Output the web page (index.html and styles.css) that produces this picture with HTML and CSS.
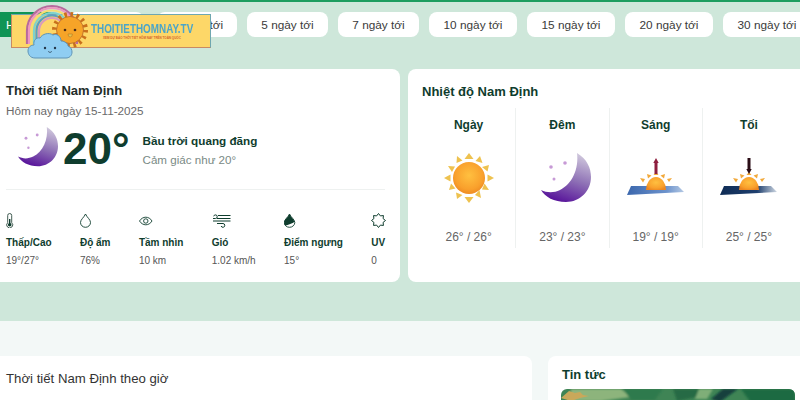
FILE: index.html
```html
<!DOCTYPE html>
<html lang="vi">
<head>
<meta charset="utf-8">
<title>Thời tiết Nam Định</title>
<link rel="stylesheet" href="styles.css">
</head>
<body>
<svg class="defs" width="0" height="0" aria-hidden="true">
  <defs>
    <linearGradient id="moonGrad" x1="0.7" y1="0" x2="0.35" y2="1">
      <stop offset="0" stop-color="#cfc7dc"/><stop offset="0.5" stop-color="#8f72b6"/><stop offset="1" stop-color="#57129a"/>
    </linearGradient>
    <radialGradient id="sunGrad" cx="0.5" cy="0.42" r="0.62">
      <stop offset="0" stop-color="#ffc040"/><stop offset="0.7" stop-color="#f9a02c"/><stop offset="1" stop-color="#ec8620"/>
    </radialGradient>
    <linearGradient id="dayGround" x1="0" y1="0" x2="1" y2="0">
      <stop offset="0" stop-color="#3b67ad"/><stop offset="0.7" stop-color="#6d93cc"/><stop offset="1" stop-color="#b4c9e4"/>
    </linearGradient>
    <linearGradient id="duskGround" x1="0" y1="0" x2="1" y2="0">
      <stop offset="0" stop-color="#0f2c55"/><stop offset="0.65" stop-color="#1e3f6e"/><stop offset="1" stop-color="#cfd8e3"/>
    </linearGradient>
    <filter id="soft"><feGaussianBlur stdDeviation="1"/></filter>
    <g id="moon">
      <path d="M36 0C46 6 50 15 50 24C50 38 39 49 25 49C13 49 4 44 0 37C6 40 13 40 19 37C31 31 38 16 36 0Z" fill="url(#moonGrad)"/>
      <g fill="#c79ad6"><circle cx="10" cy="14" r="1.800"/><circle cx="24" cy="10" r="1.800"/><circle cx="13" cy="26" r="1.500"/></g>
    </g>
    <g id="dawnRays">
      <g fill="#f2a93b"><path d="M14 25l5 1-2 3.500z"/><path d="M21 21l4.500 1.500-3.500 3z"/><path d="M30 19l2.500 3h-5z"/><path d="M39 21l-1 4.500-3.500-3z"/><path d="M46 25l-3 4-2-3z"/></g>
      <path d="M20 37a10 13 0 0 1 20 0Z" fill="url(#sunGrad)"/>
    </g>
  </defs>
</svg>

<section class="hero">
  <a class="logo" href="#" aria-label="Thời tiết hôm nay">
    <svg class="logo-art" viewBox="0 0 66 56" width="66" height="56" aria-hidden="true">
      <g fill="none" stroke-width="2.200">
        <path d="M2 40V27A25 25 0 0 1 52 27V40" stroke="#b76a9d"/>
        <path d="M4 40V27A23 23 0 0 1 50 27V40" stroke="#ef97c0"/>
        <path d="M6.500 40V27A20.500 20.500 0 0 1 47.500 27V40" stroke="#f6dc71"/>
        <path d="M9 40V27A18 18 0 0 1 45 27V40" stroke="#7fd2cc"/>
        <path d="M11.500 40V27A15.500 15.500 0 0 1 42.500 27V40" stroke="#5b9fc0"/>
        <path d="M14 40V27A13 13 0 0 1 40 27V40" stroke="#d99bbd"/>
      </g>
      <circle cx="45" cy="26" r="15.500" fill="none" stroke="#c9701c" stroke-width="5" stroke-dasharray="2.500 3.590"/>
      <circle cx="45" cy="26" r="13.500" fill="#f6a428" stroke="#b8682a" stroke-width="0.800"/>
      <circle cx="40" cy="26" r="1.300" fill="#4a2c1a"/><circle cx="50" cy="26" r="1.300" fill="#4a2c1a"/>
      <path d="M43 30a2.200 3 0 0 0 4.400 0Z" fill="#e8c34a" stroke="#a86a20" stroke-width="0.500"/>
      <path d="M10 54C5 54 3 50 3 47C3 43 6 41 9 41C8 37 11 33 15 34C17 30 24 28 28 31C31 29 36 32 36 37C40 37 43 40 43 42C46 43 47 46 47 48C47 52 44 54 41 54Z" fill="#8fcdf2" stroke="#5e93b5" stroke-width="1"/>
      <circle cx="20" cy="44" r="1.200" fill="#23384a"/><circle cx="30" cy="44" r="1.200" fill="#23384a"/>
      <path d="M23.500 47a1.500 1.500 0 0 0 3 0" fill="none" stroke="#23384a" stroke-width="0.600"/>
    </svg>
    <span class="logo-name">THOITIETHOMNAY.TV</span>
    <span class="logo-tag">XEM DỰ BÁO THỜI TIẾT HÔM NAY TRÊN TOÀN QUỐC</span>
  </a>

  <nav class="tabs">
    <a class="tab tab-active" href="#">Hôm nay</a>
    <a class="tab tab-2" href="#">Ngày mai</a>
    <a class="tab tab-3" href="#">3 ngày tới</a>
    <a class="tab tab-n" href="#">5 ngày tới</a>
    <a class="tab tab-n" href="#">7 ngày tới</a>
    <a class="tab tab-w" href="#">10 ngày tới</a>
    <a class="tab tab-w" href="#">15 ngày tới</a>
    <a class="tab tab-w" href="#">20 ngày tới</a>
    <a class="tab tab-w" href="#">30 ngày tới</a>
  </nav>

  <div class="cards">
    <article class="card current">
      <h1 class="title">Thời tiết Nam Định</h1>
      <p class="date">Hôm nay ngày 15-11-2025</p>
      <div class="now">
        <svg class="now-icon" viewBox="0 0 50 50" width="40" height="40" aria-hidden="true"><use href="#moon"/></svg>
        <div class="temp">20°</div>
        <div class="now-text">
          <div class="sky">Bầu trời quang đãng</div>
          <div class="feels">Cảm giác như 20°</div>
        </div>
      </div>
      <ul class="stats">
        <li class="stat">
          <svg class="stat-icon" width="8" height="15" viewBox="0 0 8 15" aria-hidden="true"><path d="M1.700 2.500a2 2 0 0 1 4 0v7.200a3 3 0 1 1-4 0Z" fill="none" stroke="#2c4b40" stroke-width="0.900"/><circle cx="3.700" cy="11.800" r="1.800" fill="#0f3d2e"/><rect x="3" y="6" width="1.400" height="5" fill="#0f3d2e"/></svg>
          <b>Thấp/Cao</b><span>19°/27°</span>
        </li>
        <li class="stat">
          <svg class="stat-icon" width="12" height="15" viewBox="0 0 12 15" aria-hidden="true"><path d="M5.500 1C7 4.500 10.500 6.500 10.500 9.500a5 4.800 0 0 1-10 0C.5 6.500 4 4.500 5.500 1Z" fill="none" stroke="#0f3d2e" stroke-width="0.900"/></svg>
          <b>Độ ẩm</b><span>76%</span>
        </li>
        <li class="stat">
          <svg class="stat-icon" width="14" height="15" viewBox="0 0 14 15" aria-hidden="true"><path d="M.5 8C2 5.500 4.500 4.200 6.800 4.200S11.600 5.500 13 8c-1.400 2.500-3.900 3.800-6.200 3.800S2 10.500.5 8Z" fill="none" stroke="#0f3d2e" stroke-width="0.900"/><circle cx="6.800" cy="8" r="2.200" fill="none" stroke="#0f3d2e" stroke-width="0.900"/></svg>
          <b>Tầm nhìn</b><span>10 km</span>
        </li>
        <li class="stat">
          <svg class="stat-icon" width="19" height="15" viewBox="0 0 19 15" aria-hidden="true"><path d="M1 5.500H3.500a1.800 1.800 0 1 0-1.800-2.200M6 2.500h12.500M5 5.500h13.500M1 8h17.500M5 10.500h6a1.900 1.900 0 1 1-1.900 2.500" fill="none" stroke="#0f3d2e" stroke-width="1"/></svg>
          <b>Gió</b><span>1.02 km/h</span>
        </li>
        <li class="stat">
          <svg class="stat-icon" width="12" height="15" viewBox="0 0 12 15" aria-hidden="true"><path d="M5.500 1C7 4.500 10.800 6.500 10.800 9.500a5.300 4.800 0 0 1-10.600 0C.2 6.500 4 4.500 5.500 1Z" fill="none" stroke="#0f3d2e" stroke-width="0.900"/><path d="M5.500 1C4 4.500.2 6.500.2 9.500c0 1.200.4 2.300 1.100 3C4 12 8.500 10.500 10.700 8.800 9.600 6.300 6.800 4 5.500 1Z" fill="#0f3d2e"/></svg>
          <b>Điểm ngưng</b><span>15°</span>
        </li>
        <li class="stat">
          <svg class="stat-icon" width="15" height="15" viewBox="0 0 15 15" aria-hidden="true"><polygon points="14.500,7.500 12.100,9.400 12.450,12.450 9.400,12.100 7.500,14.500 5.600,12.100 2.550,12.450 2.900,9.400 .5,7.500 2.900,5.600 2.550,2.550 5.600,2.900 7.500,.5 9.400,2.900 12.450,2.550 12.100,5.600" fill="none" stroke="#0f3d2e" stroke-width="1"/></svg>
          <b>UV</b><span>0</span>
        </li>
      </ul>
    </article>

    <article class="card temps">
      <h2 class="title">Nhiệt độ Nam Định</h2>
      <div class="periods">
        <div class="period">
          <h3>Ngày</h3>
          <svg class="period-icon" viewBox="-5 0 60 50" aria-hidden="true">
            <g fill="#eec24f">
              <path d="M25 0l4.500 6h-9z"/><path d="M36 3l2.500 7-7-2z"/><path d="M45 12l-1.500 6.500-5.500-4.500z"/><path d="M50 25l-6.500 3.500v-7z"/><path d="M45 37l-7-.5 2.500-6z"/><path d="M37 45l-6-3 4.500-5z"/><path d="M25 50l-4.500-6h9z"/><path d="M13 46l-1-6.500 6.500 2.500z"/><path d="M5 37l2-6.500 4.500 5z"/><path d="M0 25l6.500-3.500v7z"/><path d="M4 13l7 .5-3 5.500z"/><path d="M13 3l5.500 4.500-6 2.500z"/>
            </g>
            <circle cx="25" cy="25" r="16" fill="url(#sunGrad)"/>
          </svg>
          <p>26° / 26°</p>
        </div>
        <div class="period">
          <h3>Đêm</h3>
          <svg class="period-icon" viewBox="-9 0 60 50" aria-hidden="true"><use href="#moon"/></svg>
          <p>23° / 23°</p>
        </div>
        <div class="period">
          <h3>Sáng</h3>
          <svg class="period-icon" viewBox="0 0 60 50" aria-hidden="true">
            <path d="M5 33H52L58 39L1 42Z" fill="url(#dayGround)"/>
            <use href="#dawnRays"/>
            <path d="M30 5l2.700 5h-1.200v11h-3V10h-1.200z" fill="#8e1f3f"/>
          </svg>
          <p>19° / 19°</p>
        </div>
        <div class="period">
          <h3>Tối</h3>
          <svg class="period-icon" viewBox="0 0 60 50" aria-hidden="true">
            <path d="M5 33H52L58 39L1 42Z" fill="url(#duskGround)"/>
            <use href="#dawnRays"/>
            <path d="M28.500 5h3v11h1.200L30 21l-2.700-5h1.200z" fill="#2a0d16"/>
          </svg>
          <p>25° / 25°</p>
        </div>
      </div>
    </article>
  </div>
</section>

<section class="lower">
  <article class="card hourly">
    <h2 class="hourly-title">Thời tiết Nam Định theo giờ</h2>
  </article>
  <aside class="card news">
    <h2 class="title">Tin tức</h2>
    <div class="news-photo">
      <svg viewBox="0 0 234 20" width="234" height="20" aria-hidden="true">
        <rect width="234" height="20" fill="#3f8455"/>
        <g filter="url(#soft)">
          <path d="M10 0H60L70 8 40 12H8Z" fill="#8db47c"/>
          <path d="M62 0h40l-8 11H70Z" fill="#2f7a4e"/>
          <path d="M112 0h38l-14 8-20 4Z" fill="#256b45"/>
          <path d="M150 10L162 0h15l-10 7-8 6Z" fill="#123f3c"/>
          <path d="M138 0h14l-6 10h-12Z" fill="#7fae78"/>
          <path d="M180 0h54v14H190Z" fill="#1f6b42"/>
        </g>
        <path d="M0 9L8 2l6 2 5-1 3 3 6 1-9 2-9 3Z" fill="#c9a85a"/>
      </svg>
    </div>
  </aside>
</section>
</body>
</html>
```

FILE: styles.css
```css
* { box-sizing: border-box; }

html, body {
  margin: 0;
  height: 100%;
  overflow: hidden;
}

body {
  width: 800px;
  background: #f3f8f7;
  font-family: "Liberation Sans", Arial, sans-serif;
  color: #0f3d2e;
}

.defs { display: block; height: 0; }

h1, h2, h3, p, ul { margin: 0; padding: 0; }
ul { list-style: none; }
a { text-decoration: none; color: inherit; }

.hero {
  position: relative;
  height: 321px;
  background: #cee7da;
  border-top: 2px solid #1d9d5f;
  padding-top: 10px;
  overflow: hidden;
}

.logo {
  position: absolute;
  left: 11px;
  top: 12px;
  width: 200px;
  height: 34px;
  background: #fdd768;
  border: 1.500px solid #c98a62;
  border-top-color: #6fa7b0;
  border-right-color: #6fa7b0;
  z-index: 2;
}

.logo-art {
  position: absolute;
  left: 12.500px;
  top: -11.500px;
}

.logo-name {
  position: absolute;
  left: 78.500px;
  top: 8px;
  font-size: 12.500px;
  font-weight: 700;
  line-height: 13px;
  color: #4ba5c9;
  white-space: nowrap;
  transform: scaleX(0.79);
  transform-origin: left center;
}

.logo-tag {
  position: absolute;
  left: 91px;
  top: 21px;
  font-size: 3px;
  line-height: 4px;
  font-weight: 700;
  color: #d5642a;
  white-space: nowrap;
}

.tabs {
  display: flex;
  gap: 10px;
  margin-left: -18px;
  height: 25px;
  white-space: nowrap;
}

.tab {
  display: flex;
  align-items: center;
  justify-content: center;
  height: 25px;
  background: #fff;
  border-radius: 8px;
  font-size: 11.800px;
  color: #3a3a3a;
  flex: none;
}

.tab-active {
  width: 76px;
  background: #0f9455;
  color: #fff;
  justify-content: flex-start;
  padding-left: 24px;
}
.tab-2 { width: 76px; }
.tab-3 { width: 80px; margin-left: 3px; }
.tab-n { width: 81px; }
.tab-w { width: 88px; }

.cards {
  display: flex;
  gap: 8px;
  margin: 32px 0 0 -8px;
}

.card {
  background: #fff;
  border-radius: 8px;
  flex: none;
}

.current {
  width: 408px;
  height: 213px;
  padding: 12px 14px 0;
}

.temps {
  width: 401px;
  height: 213px;
  padding: 13px 14px 0 14px;
}

.title {
  font-size: 13px;
  line-height: 20px;
  font-weight: 700;
  color: #222d29;
}

.temps .title,
.news .title { color: #0f3d2e; }

.date {
  font-size: 11.700px;
  line-height: 18px;
  margin-top: 1px;
  color: #6a6a6a;
}

.now {
  display: flex;
  align-items: center;
  height: 48px;
  margin-top: 3px;
  padding-left: 12px;
}

.now-icon { flex: none; }

.temp {
  margin: 4px 0 0 5px;
  font-size: 44px;
  line-height: 48px;
  font-weight: 700;
  color: #0f3d2e;
}

.now-text { margin: 7px 0 0 13px; }

.sky {
  font-size: 11.700px;
  line-height: 16px;
  font-weight: 700;
  color: #0f3d2e;
}

.feels {
  font-size: 11.600px;
  line-height: 16px;
  margin-top: 3px;
  color: #7a8a85;
}

.stats {
  display: flex;
  gap: 28.400px;
  margin-top: 18px;
  padding-top: 23px;
  border-top: 1px solid #eef1f0;
  width: 379px;
}

.stat { display: flex; flex-direction: column; flex: none; font-size: 10px; }

.stat-icon {
  display: block;
  margin-bottom: 8px;
}

.stat b {
  line-height: 14px;
  font-weight: 700;
  color: #0f3d2e;
}

.stat span {
  line-height: 14px;
  margin-top: 4px;
  color: #555;
}

.periods {
  display: flex;
  margin-top: 6px;
}

.period {
  width: 93.500px;
  height: 140px;
  border-left: 1px solid #eef1f0;
  text-align: center;
}

.period:first-child { border-left: 0; }

.period h3 {
  margin-top: 10px;
  font-size: 12px;
  line-height: 14px;
  font-weight: 700;
  color: #0f3d2e;
}

.period-icon {
  display: block;
  width: 60px;
  height: 50px;
  margin: 21px auto 0;
}

.period p {
  margin-top: 27px;
  font-size: 12px;
  line-height: 14px;
  color: #666;
}

.lower {
  display: flex;
  gap: 16px;
  margin: 35px 0 0 -8px;
  height: 44px;
  overflow: hidden;
}

.hourly {
  width: 540px;
  height: 100px;
  padding: 14px;
}

.hourly-title {
  font-size: 13.200px;
  line-height: 18px;
  font-weight: 400;
  color: #333;
}

.news {
  width: 260px;
  height: 100px;
  padding: 9px 14px 0 14px;
}

.news-photo {
  width: 234px;
  height: 40px;
  margin: 4px 0 0 -1px;
  border-radius: 6px;
  overflow: hidden;
}

.news-photo svg { display: block; }
```
